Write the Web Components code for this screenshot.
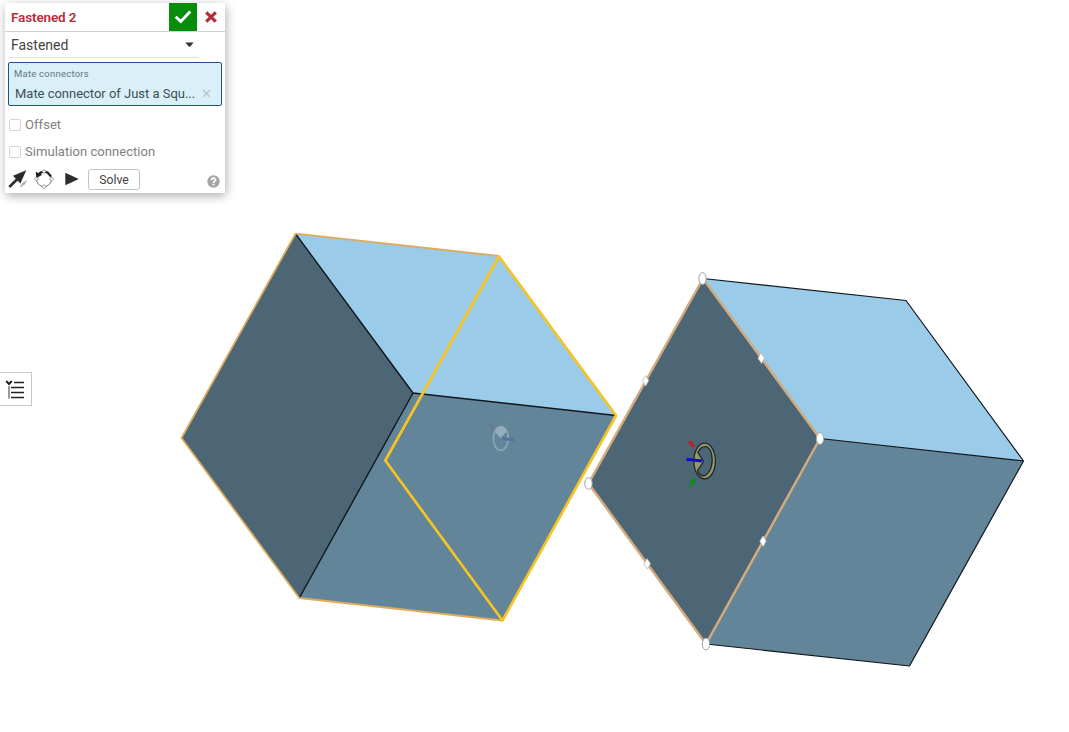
<!DOCTYPE html>
<html lang="en">
<head>
<meta charset="utf-8">
<title>Fastened mate</title>
<style>
html, body { margin: 0; height: 100%; overflow: hidden; background: #fff; }
body { font-family: Roboto, "Liberation Sans", sans-serif; }
</style>
</head>
<body>
<cad-workspace>
  <cad-viewport slot="scene"></cad-viewport>
  <mate-dialog>
    <dialog-header slot="header">Fastened 2</dialog-header>
    <mate-select>Fastened</mate-select>
    <selection-field label="Mate connectors">Mate connector of Just a Squ...</selection-field>
    <check-row style="--ls:.05px">Offset</check-row>
    <check-row style="--ls:.05px">Simulation connection</check-row>
    <dialog-tools>Solve</dialog-tools>
  </mate-dialog>
  <list-toggle slot="side"></list-toggle>
</cad-workspace>
<script>
const define = (name, html) => customElements.define(name, class extends HTMLElement {
  constructor() {
    super();
    const t = document.createElement('template');
    t.innerHTML = html;
    this.attachShadow({ mode: 'open' }).append(t.content.cloneNode(true));
  }
  connectedCallback() {
    const l = this.shadowRoot.querySelector('[data-label]');
    if (l) l.textContent = this.getAttribute('label');
  }
});

define('cad-workspace', `<style>
:host { display: grid; width: 1069px; height: 732px; grid-template: 372px 1fr / 1fr; overflow: hidden; position: relative; }
.scene { position: absolute; inset: 0; }
.dialog { padding: 3px 0 0 5px; position: relative; }
.side { position: relative; }
</style>
<div class="scene"><slot name="scene"></slot></div>
<div class="dialog"><slot></slot></div>
<div class="side"><slot name="side"></slot></div>`);

define('mate-dialog', `<style>
:host { display: flex; flex-direction: column; box-sizing: border-box; width: 220px; height: 190px; background: #fff; box-shadow: 1px 3px 10px rgba(0,0,0,.32); color: #444; }
</style><slot name="header"></slot><slot></slot>`);

define('dialog-header', `<style>
:host { display: flex; box-sizing: border-box; height: 29px; flex: none; border-bottom: 1px solid #d2d2d2; color: #b52c38; font-size: 13.5px; font-weight: 600; line-height: 28px; letter-spacing: -.13px; }
.t { flex: 1; padding-left: 6px; }
.ok { width: 28px; height: 28px; background: #078d0b; }
.no { width: 28px; height: 28px; }
svg { display: block; }
</style>
<span class="t"><slot></slot></span>
<span class="ok"><svg width="28" height="28"><path d="M6.7 13.7l5 4.700L21.300 8.600" fill="none" stroke="#fff" stroke-width="2.900"/></svg></span>
<span class="no"><svg width="28" height="28"><path d="M9.200 9.400l9.600 9.200M18.800 9.400l-9.600 9.200" stroke="#b52c38" stroke-width="3.200"/></svg></span>`);

define('mate-select', `<style>
:host { display: flex; box-sizing: border-box; width: 191px; height: 26px; margin-left: 3px; flex: none; border-bottom: 1px solid #e2e2e2; align-items: center; justify-content: space-between; padding: 0 5px 0 3px; font-size: 14px; color: #444; letter-spacing: 0; }
</style><span><slot></slot></span><svg width="9" height="5"><path d="M.3 .5H8.700L5 4.700H4z" fill="#333"/></svg>`);

define('selection-field', `<style>
:host { display: flex; flex-direction: column; box-sizing: border-box; width: 214px; height: 44px; margin: 4px 0 0 3px; flex: none; background: #d9f0f9; border: 1px solid #1d4f91; border-radius: 2px; padding: 4px 10px 0 5px; }
.l { font-size: 9.5px; line-height: 14px; color: #617780; letter-spacing: .23px; }
.r { display: flex; align-items: center; justify-content: space-between; height: 22px; margin-top: 1px; padding-left: 1px; font-size: 13px; color: #3f4e55; white-space: nowrap; letter-spacing: -.02px; }
</style><span class="l" data-label></span>
<span class="r"><span><slot></slot></span><svg width="9" height="9"><path d="M1 1l7 7M8 1l-7 7" stroke="#b6c5cb" stroke-width="1.4"/></svg></span>`);

define('check-row', `<style>
:host { display: flex; align-items: center; height: 27px; flex: none; padding-left: 4px; gap: 4px; font-size: 13px; color: #808080; letter-spacing: var(--ls); transform: translateY(5px); }
i { box-sizing: border-box; width: 12px; height: 12px; border: 1px solid #d5d5d5; border-radius: 2px; }
</style><i></i><span><slot></slot></span>`);

define('dialog-tools', `<style>
:host { display: flex; height: 22px; margin-top: 8px; flex: none; align-items: center; padding: 0 5px 0 3px; }
svg { display: block; flex: none; }
.b { box-sizing: border-box; width: 52px; height: 21px; border: 1px solid #c4c4c4; border-radius: 3px; margin: 0 67px 0 9px; text-align: center; font-size: 12.2px; line-height: 20px; color: #444; }
</style>
<svg width="20" height="20"><path d="M1.300 18L11 8.500" stroke="#2b2b2b" stroke-width="2.600"/><path d="M18.300 1.200L5 6.700L12.400 14.500z" fill="#2b2b2b"/><path d="M12.300 18l4-4.200" stroke="#aaa" stroke-width="1.300"/><path d="M19.300 10.700L13.800 14.600L16 16.600z" fill="#aaa"/></svg>
<svg width="22" height="22" style="margin-left:5px"><g transform="translate(0 -.5)"><circle cx="11" cy="11.500" r="7.600" fill="none" stroke="#777"/><path d="M5 7.200Q9.500 2.500 14.500 5L18 9" fill="none" stroke="#222" stroke-width="2.200"/><path d="M2.800 4.300l.5 6.500L9.200 7.300z" fill="#222"/><path d="M11 2l2 2-2 2-2-2zM3.500 9.500l2 2-2 2-2-2zM18.500 9.500l2 2-2 2-2-2zM11 17.200l2 2-2 2-2-2z" fill="#fff" stroke="#777" stroke-width=".8"/></g></svg>
<svg width="14" height="14" style="margin:-1px 0 0 10px"><path d="M.3 .8L13.800 7L.3 13.200z" fill="#2e2e2e"/></svg>
<span class="b"><slot></slot></span>
<svg width="13" height="13" style="margin-top:5px" viewBox="0 0 13 13"><circle cx="6.5" cy="6.5" r="6.2" fill="#a5a5a5"/><path d="M4.500 5.100C4.600 2.500 8.600 2.600 8.500 4.900C8.400 6.200 6.500 6.200 6.500 7.900" fill="none" stroke="#fff" stroke-width="1.7"/><path d="M5.600 8.800h1.800v1.700H5.600z" fill="#fff"/></svg>`);

define('list-toggle', `<style>
:host { display: block; box-sizing: border-box; width: 32px; height: 34px; border: 1px solid #c9c9c9; border-left: 0; background: #fff; }
svg { display: block; }
</style><svg width="31" height="32"><path d="M14 9.500H24M11 14.500H24M11 19.500H24M11 24.500H24" stroke="#222" stroke-width="1.300"/><path d="M9 13V25.500" stroke="#999" stroke-width="2"/><path d="M6.200 8l2.800 3 2.800-3" fill="none" stroke="#222" stroke-width="2"/></svg>`);

define('cad-viewport', `<style>:host, svg { display: block; }</style>
<svg width="1069" height="732" viewBox="0 0 1069 732">
<g stroke-linejoin="round">
<path d="M295.500 233.700L499 256L616 415.500L413 393z" fill="#9acbe8"/>
<path d="M295.500 233.700L413 393L299.300 598L181.500 438z" fill="#4d6675"/>
<path d="M413 393L616 415.500L502.500 620.500L299.300 598z" fill="#638599"/>
<path d="M295.500 233.700L413 393L299.300 598M413 393L616 415.500" fill="none" stroke="#10161b" stroke-width="1.4"/>
<path d="M499 256L295.500 233.700L181.500 438L299.300 598L502.500 620.500" fill="none" stroke="#dcab5c" stroke-width="1.8"/>
<path d="M499 256.500L616 415.500L502.500 620.500L385.300 460.500z" fill="none" stroke="#f6c324" stroke-width="2.700"/>
<path d="M703 278.500L906 300.500L1023.500 461L820 438.500z" fill="#9acbe8"/>
<path d="M703 278.500L820 438.500L706 644L588.500 483.500z" fill="#4d6675"/>
<path d="M820 438.500L1023.500 461L909.500 666L706 644z" fill="#638599"/>
<path d="M703 278.500L906 300.500L1023.500 461L909.500 666L706 644M820 438.500L1023.500 461" fill="none" stroke="#10161b" stroke-width="1.2"/>
<path d="M703 278.500L820 438.500L706 644L588.500 483.500z" fill="none" stroke="#d3aa7c" stroke-width="2.5"/>
</g>
<g fill="#fff" stroke="#9aa3aa" stroke-width="1">
<ellipse cx="702.500" cy="278.500" rx="3.700" ry="5.900"/><ellipse cx="820" cy="438.500" rx="3.700" ry="5.900"/><ellipse cx="706" cy="644" rx="3.700" ry="5.900"/><ellipse cx="588.500" cy="483.500" rx="3.700" ry="5.900"/>
</g>
<g fill="#fff" stroke="#b4babd" stroke-width=".8">
<path d="M761 353l3.400 5-2.800 5.600-3.600-5.300zM645.500 375.500l3.200 5-3 5.500-3.400-5.200zM763 536l3.200 5-3 5.500-3.400-5.200zM647 558.500l3.400 5-2.900 5.500-3.500-5.200z"/>
</g>
<g fill="none" opacity=".65">
<path d="M489.500 423.500l5 6" stroke="#79698a" stroke-width="2.200"/><path d="M511 419.500l-4.500 7" stroke="#5c9790" stroke-width="2.200"/>
<ellipse cx="500.800" cy="438.500" rx="7.500" ry="11.800" stroke="#9bb6c5" stroke-width="1.900"/>
<path d="M494.800 432Q500 422 507 431L500.500 438z" fill="#adc6d3"/><path d="M502.500 438.500l11.500 1.500" stroke="#5268b0" stroke-width="3"/>
</g>
<g fill="none">
<path d="M689 441.200l5.300 6" stroke="#c31b20" stroke-width="2.700"/><path d="M694.700 478.500l-4.200 7.500" stroke="#079216" stroke-width="3.200"/>
<ellipse cx="704.600" cy="461" rx="10.800" ry="17.800" fill="#99986b" stroke="#1d292c" stroke-width="1.300"/>
<path d="M697.800 452.500C702 444 709 445 711.300 453C713.500 462 711.500 472 705 475.500C701.500 476.500 698.800 474.300 697.500 470.500L703.600 461.500z" fill="#4d6675" stroke="#1d292c" stroke-width="1.300"/>
<path d="M686.500 459.200l15.500 1.700" stroke="#0c10c0" stroke-width="3"/>
</g>
</svg>`);
</script>
</body>
</html>
